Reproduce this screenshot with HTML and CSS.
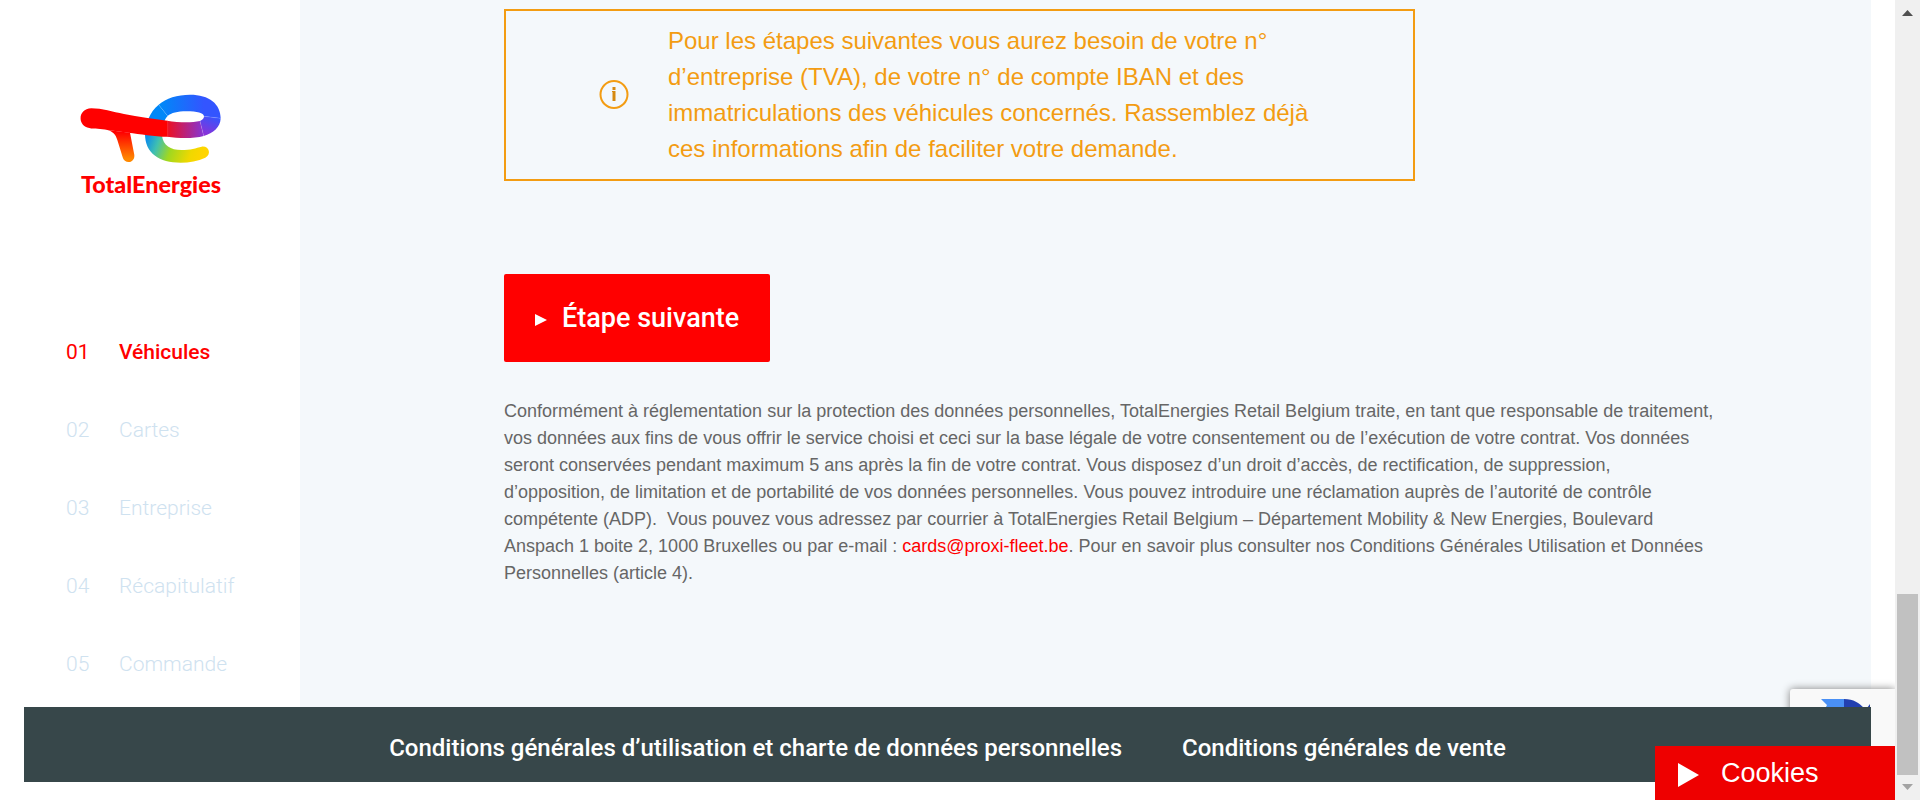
FILE: index.html
```html
<!DOCTYPE html>
<html lang="fr">
<head>
<meta charset="utf-8">
<title>TotalEnergies – Véhicules</title>
<link rel="stylesheet" href="styles.css">
</head>
<body>
<div class="page">
  <div class="layout">
    <aside class="sidebar">
      <svg class="logo" viewBox="58 40 426 312" role="img" aria-label="TotalEnergies">
        <defs>
          <linearGradient id="g-top" gradientUnits="userSpaceOnUse" x1="300" y1="0" x2="430" y2="0"><stop offset="0" stop-color="#0088f8"/><stop offset="1" stop-color="#3355ff"/></linearGradient>
          <linearGradient id="g-right" gradientUnits="userSpaceOnUse" x1="460" y1="105" x2="435" y2="160"><stop offset="0" stop-color="#3355ff"/><stop offset="1" stop-color="#8833d8"/></linearGradient>
          <linearGradient id="g-bar" gradientUnits="userSpaceOnUse" x1="320" y1="0" x2="425" y2="0"><stop offset="0" stop-color="#ee1020"/><stop offset="1" stop-color="#8833d0"/></linearGradient>
          <linearGradient id="g-tail" gradientUnits="userSpaceOnUse" x1="262" y1="165" x2="425" y2="225"><stop offset="0" stop-color="#0e8fe8"/><stop offset=".2" stop-color="#40c0b0"/><stop offset=".45" stop-color="#a0d820"/><stop offset=".8" stop-color="#f0d800"/><stop offset="1" stop-color="#ffd500"/></linearGradient>
          <linearGradient id="g-leg" gradientUnits="userSpaceOnUse" x1="0" y1="155" x2="0" y2="235"><stop offset="0" stop-color="#f00"/><stop offset="1" stop-color="#ff8800"/></linearGradient>
        </defs>
        <path fill="#0088f8" d="M253 165C255 128 266 95 294 72L321 106C310 116 304 140 304 165Z"/>
        <path fill="url(#g-top)" d="M294 72C316 52 350 42 388 42C446 42 480 70 480 113L430 107C429 97 410 92 377 92C350 92 332 97 321 106Z"/>
        <path fill="url(#g-right)" d="M430 107L480 113C479 140 458 158 429 166L418 121C426 118 430 113 430 107Z"/>
        <path fill="url(#g-bar)" d="M319 120C355 126 392 127 418 121L429 166C400 174 358 174 319 168Z"/>
        <path fill="url(#g-tail)" d="M253 160L304 165C307 193 330 208 362 208C390 208 406 202 423 198C446 195 453 222 434 231C412 241 386 246 360 246C296 246 253 218 253 160Z"/>
        <path fill="url(#g-leg)" d="M140 148L208 156L221 223C223 250 190 250 186 230L170 178C165 160 155 152 140 148Z"/>
        <path fill="#f00" d="M92 83C124 83 156 94 190 100C234 109 277 115 320 120V168C280 168 238 160 203 156L140 148C121 143 100 146 86 142C50 136 50 85 92 83Z"/>
        <path fill="none" stroke="#fff" stroke-opacity=".4" d="M294 72L321 106M430 107L480 113M418 121L429 166M321 120V168"/>
        <text class="logo-name" x="271" y="336" text-anchor="middle">TotalEnergies</text>
      </svg>
      <ol class="steps">
        <li class="step step-active"><span class="step-number">01</span><span>Véhicules</span></li>
        <li class="step"><span class="step-number">02</span><span>Cartes</span></li>
        <li class="step"><span class="step-number">03</span><span>Entreprise</span></li>
        <li class="step"><span class="step-number">04</span><span>Récapitulatif</span></li>
        <li class="step"><span class="step-number">05</span><span>Commande</span></li>
      </ol>
    </aside>
    <main class="content">
      <div class="notice">
        <svg class="notice-icon" viewBox="0 0 30 30" aria-hidden="true">
          <circle cx="15" cy="14.500" r="13.500" fill="none" stroke="#f39c12" stroke-width="2"/>
          <path fill="#d68910" d="M13.500 7h3v3h-3zM13 11h3.500v10h-3v-9h-.5z"/>
        </svg>
        <p class="notice-text">Pour les étapes suivantes vous aurez besoin de votre n° d’entreprise (TVA), de votre n° de compte IBAN et des immatriculations des véhicules concernés. Rassemblez déjà ces informations afin de faciliter votre demande.</p>
      </div>
      <button class="next" type="button">
        <svg class="next-icon" viewBox="0 0 12 12" aria-hidden="true"><path fill="#fff" d="M0 0L12 6L0 12Z"/></svg>
        Étape suivante
      </button>
      <p class="legal">Conformément à réglementation sur la protection des données personnelles, TotalEnergies Retail Belgium traite, en tant que responsable de traitement, vos données aux fins de vous offrir le service choisi et ceci sur la base légale de votre consentement ou de l’exécution de votre contrat. Vos données seront conservées pendant maximum 5 ans après la fin de votre contrat. Vous disposez d’un droit d’accès, de rectification, de suppression, d’opposition, de limitation et de portabilité de vos données personnelles. Vous pouvez introduire une réclamation auprès de l’autorité de contrôle compétente (ADP).&nbsp; Vous pouvez vous adressez par courrier à TotalEnergies Retail Belgium – Département Mobility &amp; New Energies, Boulevard Anspach 1 boite 2, 1000 Bruxelles ou par e-mail : <a href="mailto:cards@proxi-fleet.be">cards@proxi-fleet.be</a>. Pour en savoir plus consulter nos Conditions Générales Utilisation et Données Personnelles (article 4).</p>
    </main>
  </div>
  <footer class="footer">
    <a href="#utilisation">Conditions générales d’utilisation et charte de données personnelles</a>
    <a href="#vente">Conditions générales de vente</a>
  </footer>
  <div class="badge">
    <svg class="badge-icon" viewBox="0 0 60 60" aria-hidden="true">
      <path fill="#4a90f5" d="M0 0H23V16H10L5 8L6 6Z"/>
      <path fill="#2340b0" d="M23 0C33 0 38 4 43 9H46L49 5V16H23Z"/>
    </svg>
  </div>
  <button class="cookies" type="button">
    <svg class="cookies-icon" viewBox="0 0 21 24" aria-hidden="true"><path fill="#fff" d="M0 0L21 12L0 24Z"/></svg>
    Cookies
  </button>
</div>
<div class="scrollbar" aria-hidden="true">
  <svg class="scroll-arrow" viewBox="0 0 11 6"><path fill="#505050" d="M5.500 0L11 6H0Z"/></svg>
  <div class="scroll-track"><div class="scroll-thumb"></div></div>
  <svg class="scroll-arrow" viewBox="0 0 11 6"><path fill="#a3a3a3" d="M0 0H11L5.500 6Z"/></svg>
</div>
</body>
</html>
```
FILE: styles.css
```css
* { box-sizing: border-box; }

body {
  margin: 0;
  display: flex;
  height: 100vh;
  overflow: hidden;
  background: #fff;
  font-family: "Liberation Sans", Arial, sans-serif;
}

p, ol { margin: 0; padding: 0; }

.page {
  flex: 1;
  position: relative;
  display: flex;
  flex-direction: column;
  padding: 0 24px 18px;
  overflow: hidden;
}

.layout { flex: 1; display: flex; }

.sidebar {
  width: 276px;
  flex: none;
  padding: 94px 0 0 42px;
}

.logo { display: block; width: 142px; margin-left: 14px; }
.logo-name { font: 900 70px Lato, sans-serif; fill: #f00; }

.steps {
  list-style: none;
  margin-top: 115px;
  font-family: Roboto, sans-serif;
  font-size: 21px;
  font-weight: 300;
  color: #cfe2f0;
}
.step { display: flex; height: 78px; align-items: center; }
.step-number { width: 53px; }
.step-active { color: #f00; font-weight: 500; }
.step-active .step-number { font-weight: 400; }

.content {
  flex: 1;
  padding: 9px 156px 0 204px;
  background: #f4f8fb;
}

.notice {
  display: flex;
  align-items: center;
  gap: 39px;
  max-width: 911px;
  padding: 12px 92px 12px 93px;
  border: 2px solid #f39c12;
  color: #f39c12;
}
.notice-icon { width: 30px; flex: none; }
.notice-text { font-size: 24px; line-height: 36px; }

.next {
  display: flex;
  align-items: center;
  gap: 15px;
  height: 88px;
  margin-top: 93px;
  padding: 0 31px;
  border: 0;
  border-radius: 2px;
  background: #f00;
  color: #fff;
  font: 500 27px Roboto, sans-serif;
}
.next-icon { width: 12px; margin-top: 4px; }

.legal {
  margin-top: 36px;
  font-size: 18px;
  line-height: 27px;
  color: #666;
}
.legal a { color: #f00; text-decoration: none; }

.footer {
  position: relative;
  z-index: 2;
  display: flex;
  justify-content: center;
  align-items: center;
  gap: 60px;
  height: 75px;
  padding-top: 6px;
  background: #37474a;
  font: 500 24px Roboto, sans-serif;
}
.footer a { color: #fff; text-decoration: none; }

.badge {
  position: absolute;
  z-index: 1;
  right: 0;
  bottom: 21px;
  width: 105px;
  height: 90px;
  padding: 10px 0 0 31px;
  border-radius: 3px 0 0 3px;
  background: #f9f9f9;
  box-shadow: 0 0 8px #808080;
}
.badge-icon { display: block; width: 60px; }

.cookies {
  position: absolute;
  z-index: 3;
  right: 0;
  bottom: 0;
  display: flex;
  align-items: center;
  gap: 22px;
  width: 240px;
  height: 54px;
  padding: 0 23px;
  border: 0;
  background: #ee0000;
  color: #fff;
  font: 27px "Liberation Sans", Arial, sans-serif;
}
.cookies-icon { width: 21px; margin-top: 4px; }

.scrollbar {
  display: flex;
  flex-direction: column;
  align-items: center;
  width: 25px;
  padding: 10px 0;
  background: #f0f0f0;
}
.scroll-arrow { width: 11px; height: 6px; }
.scroll-track {
  flex: 1;
  display: flex;
  flex-direction: column;
  justify-content: flex-end;
  padding-bottom: 9px;
}
.scroll-thumb { width: 21px; height: 181px; background: #c1c1c1; }
```
